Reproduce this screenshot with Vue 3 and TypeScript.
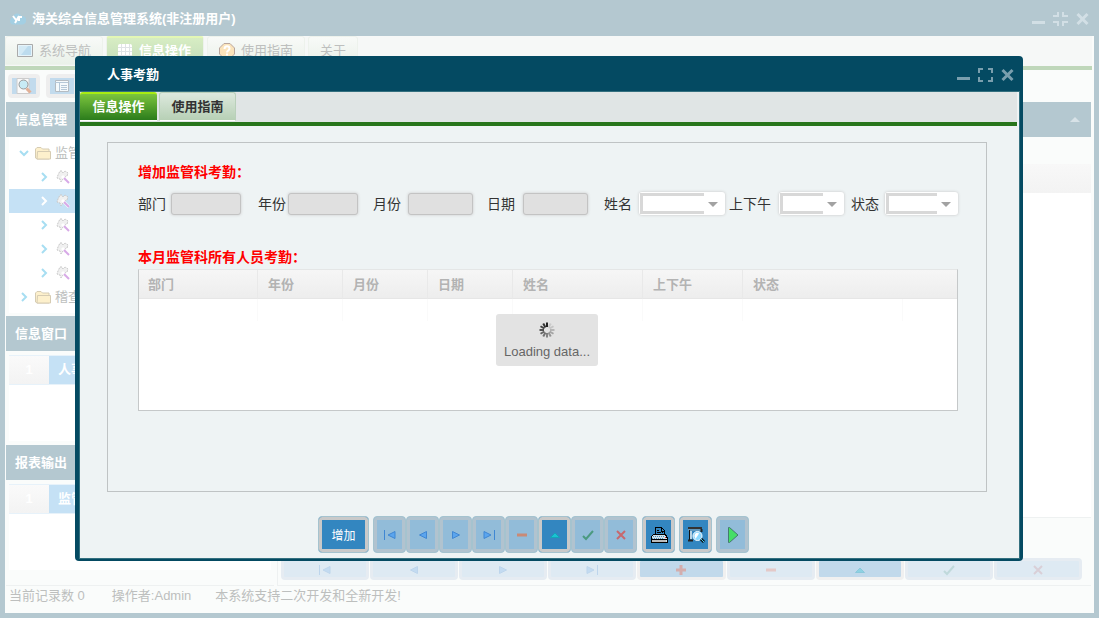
<script setup lang="ts">
import { ref } from 'vue'

interface NavAction {
  name: string
  label: string
  off: boolean
}

interface Field {
  id: string
  label: string
  kind: 'input' | 'select'
  size: string
}

const glyphs: Record<string, string> = {
  first: 'M1.500 1v10M12 2.500v7L5 6z',
  prev: 'M10.500 2.500v7L3.500 6z',
  next: 'M3.500 2.500v7l7-3.500z',
  last: 'M12.500 1v10M2 2.500v7L9 6z',
  plus: 'M2 6h10M7 1v10',
  minus: 'M2 6h10',
  edit: 'M2.500 8.500L7 4l4.500 4.500z',
  check: 'M2 7l3 3 7-8',
  cross: 'M3 2l8 8m0-8l-8 8',
}

const dialogActions: NavAction[] = [
  { name: 'first', label: '首条', off: true },
  { name: 'prev', label: '上一条', off: true },
  { name: 'next', label: '下一条', off: true },
  { name: 'last', label: '末条', off: true },
  { name: 'minus', label: '删除', off: true },
  { name: 'edit', label: '编辑', off: false },
  { name: 'check', label: '保存', off: true },
  { name: 'cross', label: '取消', off: true },
]

const mainActions: NavAction[] = [
  ...dialogActions.slice(0, 4),
  { name: 'plus', label: '增加', off: false },
  ...dialogActions.slice(4),
]

const fields: Field[] = [
  { id: 'dept', label: '部门', kind: 'input', size: 'wide' },
  { id: 'year', label: '年份', kind: 'input', size: 'wide' },
  { id: 'month', label: '月份', kind: 'input', size: 'short' },
  { id: 'day', label: '日期', kind: 'input', size: 'short' },
  { id: 'person', label: '姓名', kind: 'select', size: 'full' },
  { id: 'half', label: '上下午', kind: 'select', size: 'short' },
  { id: 'state', label: '状态', kind: 'select', size: 'mid' },
]

const columns = ['部门', '年份', '月份', '日期', '姓名', '上下午', '状态', '']
const treeItems = [0, 1, 2, 3, 4]
const selectedItem = ref(1)
const spokes = Array.from({ length: 12 }, (_, i) => ({
  turn: `rotate(${-i * 30} 8 8)`,
  fade: Math.max(0.12, 1 - i * 0.085),
}))
</script>

<template>
  <div class="desktop">
    <header class="titlebar">
      <svg class="logo" width="16" height="14" viewBox="0 0 16 14">
        <path d="M4 12.500a3.500 3.500 0 0 1-1-7A4.500 4.500 0 0 1 11.500 4 4 4 0 0 1 12.500 12.500z" fill="#a3cfe3" />
        <path d="M3 4l3 4M9 4l-4 7M9 9V5h3" fill="none" stroke="#fff" stroke-width="2" />
      </svg>
      <h1>海关综合信息管理系统(非注册用户)</h1>
      <div class="controls">
        <button type="button" aria-label="最小化"><svg width="14" height="14"><path d="M1 9h13v3H1z" /></svg></button>
        <button type="button" aria-label="还原"><svg width="15" height="14"><path d="M4 0h2v5H0V3h4zM9 0h2v3h4v2H9zM0 9h6v5H4v-3H0zM9 9h6v2h-4v3H9z" /></svg></button>
        <button type="button" aria-label="关闭"><svg width="13" height="14"><path d="M1.500 2l10 10m0-10l-10 10" class="x" /></svg></button>
      </div>
    </header>

    <div class="workspace">
      <nav class="tabs">
        <button type="button" class="with-icon">
          <svg width="16" height="14"><path d="M.5.500h15v12H.5z" fill="#e6f4fa" stroke="#aaa" /><path d="M2 2h12v9H2z" fill="#bddcee" /><path d="M2 2h9L4 11H2z" fill="#d4eaf5" /></svg>
          系统导航
        </button>
        <button type="button" class="with-icon current">
          <svg width="14" height="14"><rect width="14" height="14" rx="2" fill="#fff" /><path d="M0 3.500h14M0 7.500h14M0 11.500h14M3.500 0v14M7.500 0v14M11.500 0v14" stroke="#dfe3e6" /></svg>
          信息操作
        </button>
        <button type="button" class="with-icon">
          <svg width="16" height="16"><path d="M5 .5h6l4.500 4.500v6L11 15.500H5L.5 11V5z" fill="#fbe4bb" stroke="#b9a69d" /><path d="M5.500 6c0-4 5-3.500 5-.5 0 2-2.500 2-2.500 4m0 1v2" fill="none" stroke="#fff" stroke-width="2" /></svg>
          使用指南
        </button>
        <button type="button">关于</button>
      </nav>
      <div class="tools">
        <button type="button" aria-label="查询">
          <svg width="16" height="16"><path d="M1 .5h12v15H1z" fill="#fafafa" stroke="#ccc" /><circle cx="7.500" cy="6.500" r="4.500" fill="#c8ebf5" stroke="#999" /><path d="M10.500 10.500l4 4" stroke="#e2b097" stroke-width="3" /></svg>
        </button>
        <button type="button" aria-label="列表">
          <svg width="16" height="16"><path d="M1.500 2.500h13v11h-13z" fill="#f5fafc" stroke="#b5bcc2" /><path d="M1 4.500h13M5.500 4v9M7 7.500h6M7 9.500h6M7 11.500h6" stroke="#b5c8d8" /></svg>
        </button>
      </div>

      <div class="columns">
        <aside class="side">
          <section class="tree-panel">
            <h2>信息管理</h2>
            <ul class="tree">
              <li class="branch">
                <svg width="10" height="10" class="caret"><path d="M1 3l4 4 4-4" /></svg>
                <svg width="16" height="13" class="folder"><path d="M.5 11V2l1.500-1.500h4L7.500 2H14v10H2z" /><path d="M2.500 4.500h13V12H2z" /></svg>
                监管
              </li>
              <li v-for="item in treeItems" :key="item" class="leaf" :class="{ selected: item === selectedItem }" @click="selectedItem = item">
                <svg width="10" height="10" class="caret"><path d="M3 1l4 4-4 4" /></svg>
                <svg width="14" height="14" class="tool"><path d="M4 1h2l1 2 2-2 3 2-1 3-2 1 0 3-2-1-2 3-1-3-3-1 1-3z" fill="#f0f0f0" stroke="#c8c8c8" stroke-dasharray="2 1" /><path d="M6 6l7 7" stroke="#fff" stroke-width="3" /><path d="M8 8l5 5" stroke="#d7a9e7" stroke-width="2" /></svg>
              </li>
              <li class="branch">
                <svg width="10" height="10" class="caret"><path d="M3 1l4 4-4 4" /></svg>
                <svg width="16" height="13" class="folder"><path d="M.5 11V2l1.500-1.500h4L7.500 2H14v10H2z" /><path d="M2.500 4.500h13V12H2z" /></svg>
                稽查
              </li>
            </ul>
          </section>
          <section class="window-panel">
            <h2>信息窗口</h2>
            <div class="list"><div class="entry"><b>1</b><span>人事考勤</span></div></div>
          </section>
          <section class="report-panel">
            <h2>报表输出</h2>
            <div class="list"><div class="entry"><b>1</b><span>监管</span></div></div>
          </section>
        </aside>
        <main class="content">
          <div class="content-head"><svg width="10" height="6"><path d="M0 5l5-5 5 5z" /></svg></div>
          <div class="content-sub"></div>
          <div class="content-cols"></div>
          <div class="content-body"></div>
          <div class="main-actions">
            <button v-for="a in mainActions" :key="a.name" type="button" class="nav" :class="{ off: a.off }" :aria-label="a.label">
              <svg width="14" height="12" viewBox="0 0 14 12" :class="a.name"><path :d="glyphs[a.name]" /></svg>
            </button>
          </div>
        </main>
      </div>
      <footer class="status">
        <span>当前记录数 0</span>
        <span>操作者:Admin</span>
        <span>本系统支持二次开发和全新开发!</span>
      </footer>
    </div>

    <div class="dialog" role="dialog" aria-labelledby="dialog-title">
      <header class="dialog-title">
        <h2 id="dialog-title">人事考勤</h2>
        <div class="controls">
          <button type="button" aria-label="最小化"><svg width="14" height="14"><path d="M1 9h13v3H1z" /></svg></button>
          <button type="button" aria-label="最大化"><svg width="15" height="14"><path d="M0 0h5v2H2v3H0zM10 0h5v5h-2V2h-3zM0 9h2v3h3v2H0zM13 9h2v5h-5v-2h3z" /></svg></button>
          <button type="button" aria-label="关闭"><svg width="13" height="14"><path d="M1.500 2l10 10m0-10l-10 10" class="x" /></svg></button>
        </div>
      </header>
      <div class="dialog-body">
        <nav class="dialog-tabs">
          <button type="button" class="current">信息操作</button>
          <button type="button">使用指南</button>
        </nav>
        <div class="frame">
          <h3>增加监管科考勤：</h3>
          <form class="fields" @submit.prevent>
            <template v-for="f in fields" :key="f.id">
              <label :for="f.id">{{ f.label }}</label>
              <input v-if="f.kind === 'input'" :id="f.id" type="text" readonly :class="f.size" />
              <div v-else class="picker" :class="f.size">
                <select :id="f.id"><option></option></select>
                <svg width="10" height="5"><path d="M0 0h10L5 5z" /></svg>
              </div>
            </template>
          </form>
          <h3>本月监管科所有人员考勤：</h3>
          <div class="grid">
            <table>
              <colgroup>
                <col class="c119" /><col class="c85" /><col class="c85" /><col class="c85" />
                <col class="c130" /><col class="c100" /><col class="c160" /><col />
              </colgroup>
              <thead>
                <tr><th v-for="(c, i) in columns" :key="i">{{ c }}</th></tr>
              </thead>
              <tbody>
                <tr><td v-for="(c, i) in columns" :key="i"></td></tr>
              </tbody>
            </table>
            <div class="loading">
              <svg width="16" height="16">
                <path v-for="(s, i) in spokes" :key="i" d="M8 .5V5" :transform="s.turn" :opacity="s.fade" stroke="#222" stroke-width="2" />
              </svg>
              <span>Loading data...</span>
            </div>
          </div>
        </div>
        <div class="dialog-actions">
          <button type="button" class="nav add">增加</button>
          <div class="nav-group">
            <button v-for="a in dialogActions" :key="a.name" type="button" class="nav" :class="{ off: a.off }" :aria-label="a.label">
              <svg width="14" height="12" viewBox="0 0 14 12" :class="a.name"><path :d="glyphs[a.name]" /></svg>
            </button>
          </div>
          <button type="button" class="nav" aria-label="打印">
            <svg width="18" height="18" viewBox="0 0 18 18" shape-rendering="crispEdges">
              <path d="M5.500 8V1.500h6l3 3V8" fill="#3386c0" stroke="#000" />
              <path d="M11.500 1v4H15M7 4.500h2M7 6.500h4M12 6.500h1" fill="none" stroke="#000" />
              <path d="M3.500 8.500h12l1.500 3v5H1v-5z" fill="#cfe0e8" stroke="#000" />
              <path d="M3 10h12M2 12h12" stroke="#4b8fba" stroke-dasharray="1 1" />
              <path d="M1 13.500h16" stroke="#000" />
              <path d="M2 15h14" stroke="#bbb" stroke-width="2" />
              <path d="M15 11h1v1h-1z" fill="#e33" />
            </svg>
          </button>
          <button type="button" class="nav" aria-label="预览">
            <svg width="18" height="18" viewBox="0 0 18 18">
              <path d="M1 2h14" stroke="#333" stroke-width="2" />
              <path d="M1 4h13" stroke="#8fa9b8" />
              <path d="M2.500 4v10" stroke="#111" /><path d="M4 5v8" stroke="#b9d4e4" stroke-width="2" />
              <path d="M1 14.500h5M14.500 3v3" stroke="#222" stroke-width="2" />
              <circle cx="10.500" cy="10" r="4.500" fill="#8ad8ff" stroke="#f4fbff" />
              <path d="M7.500 10c0-3.500 3.500-4 4.500-2.500L8.500 13z" fill="#fff" />
              <path d="M14 13l3 3" stroke="#111" stroke-width="3" /><path d="M14 13l3 3" stroke="#4ce" />
            </svg>
          </button>
          <button type="button" class="nav off" aria-label="执行">
            <svg width="12" height="18"><path d="M1.500 1.500v15h1l8.500-7.500-8.500-7.500z" fill="#45de67" stroke="#447b70" /></svg>
          </button>
        </div>
      </div>
    </div>
  </div>
</template>

<style>
body {
  margin: 0;
  overflow: hidden;
}
</style>

<style scoped>
.desktop {
  display: flex;
  flex-direction: column;
  box-sizing: border-box;
  height: 100vh;
  padding: 0 5px 5px;
  background: #b4c8d0;
  color: #bdbfbe;
  font: 13px/20px "Liberation Sans", "Noto Sans CJK SC", sans-serif;
}
h1, h2, h3 {
  margin: 0;
  font-size: 13px;
}
button {
  padding: 0;
  border: 0;
  background: none;
  color: inherit;
  font: inherit;
  white-space: nowrap;
}
svg {
  flex: none;
  display: block;
}
.titlebar {
  flex: none;
  display: flex;
  align-items: center;
  height: 36px;
  padding: 2px 5px 0;
  box-sizing: border-box;
  color: #fff;
}
.logo {
  margin-right: 6px;
}
.controls {
  display: flex;
  gap: 8px;
  margin-left: auto;
  color: #d2dfe5;
}
.controls path {
  fill: currentColor;
}
.controls .x {
  stroke: currentColor;
  stroke-width: 3;
}
.workspace {
  flex: 1;
  min-height: 0;
  display: flex;
  flex-direction: column;
  background: #fafcfb;
}
.tabs {
  flex: none;
  display: flex;
  gap: 3px;
  height: 30px;
  box-sizing: border-box;
  margin-right: 2px;
  background: #f6f8f7;
}
.tabs button {
  display: flex;
  align-items: center;
  gap: 6px;
  height: 29px;
  padding: 0 11px;
  box-sizing: border-box;
  border: 1px solid #edf2ec;
  border-radius: 3px 3px 0 0;
  background: linear-gradient(#f8faf8, #eaf1e9);
}
.tabs .with-icon {
  width: 98px;
}
.tabs .current {
  gap: 7px;
  border-top: 2px solid #e3f7b5;
  background: linear-gradient(#d7edc3, #c3dcba);
  color: #fff;
  font-weight: bold;
}
.tools {
  flex: none;
  display: flex;
  gap: 6px;
  height: 36px;
  padding: 4px 3px;
  box-sizing: border-box;
  margin-right: 2px;
  border-top: 4px solid #bfd7ba;
}
.tools button {
  display: grid;
  place-items: center;
  width: 32px;
  height: 24px;
  border: 4px solid #eee;
  box-sizing: border-box;
  border-radius: 4px;
  background: #c2dbed;
}
.columns {
  flex: 1;
  min-height: 0;
  display: flex;
  gap: 3px;
  padding: 0 3px 0 1px;
}
.side {
  flex: none;
  display: flex;
  flex-direction: column;
  width: 268px;
}
.side h2 {
  height: 35px;
  padding-left: 9px;
  background: #b4c8d0;
  color: #fff;
  line-height: 35px;
}
.tree-panel {
  height: 214px;
}
.tree {
  margin: 0 3px;
  padding: 4px 0;
  background: #fff;
  list-style: none;
}
.tree li {
  display: flex;
  align-items: center;
  height: 24px;
}
.branch {
  padding-left: 10px;
}
.leaf {
  gap: 6px;
  padding-left: 30px;
}
.selected {
  background: #c5e1f5;
}
.caret {
  fill: none;
  stroke: #a7def2;
  stroke-width: 2;
}
.selected .caret {
  stroke: #fff;
}
.folder {
  margin: 0 4px 0 6px;
  fill: #fdf0cc;
  stroke: #d6ccb3;
}
.leaf .tool {
  margin-left: 1px;
}
.window-panel {
  display: flex;
  flex-direction: column;
  height: 129px;
}
.window-panel h2 {
  flex: none;
}
.report-panel {
  flex: 1;
  border-bottom: 1px solid #eef1f1;
}
.list {
  flex: 1;
  min-height: 86px;
  margin: 4px 3px;
  background: #fff;
}
.entry {
  display: flex;
  border: solid #e7f2fa;
  border-width: 1px 0;
  color: #fff;
  font-weight: bold;
  line-height: 28px;
}
.entry b {
  width: 40px;
  background: linear-gradient(#fafafa, #f3f3f3);
  text-align: center;
}
.entry span {
  flex: 1;
  padding-left: 9px;
  background: #c5e1f5;
}
.content {
  flex: 1;
  display: flex;
  flex-direction: column;
  border: solid #eef1f1;
  border-width: 0 0 1px 1px;
}
.content-head {
  display: flex;
  align-items: center;
  justify-content: flex-end;
  height: 35px;
  padding-right: 11px;
  background: #b4c8d0;
  fill: #d7e2e7;
}
.content-sub {
  height: 27px;
}
.content-cols {
  height: 29px;
  background: linear-gradient(#f8f8f8, #f3f3f3);
}
.content-body {
  flex: 1;
  background: #fff;
  border-bottom: 1px solid #eef1f1;
}
.main-actions {
  display: grid;
  grid-template-columns: repeat(9, 1fr);
  gap: 1px;
  padding: 40px 9px 5px 3px;
}
.main-actions .nav {
  width: auto;
  height: 22px;
  padding-top: 2px;
  border: 3px solid #f0f0f0;
  box-shadow: none;
  background: #c1d9eb;
}
.main-actions .off {
  border-color: #e6ecf2;
  background: #deeaf3;
}
.main-actions svg {
  opacity: 0.3;
}
.main-actions .off svg {
  opacity: 0.2;
}
.status {
  flex: none;
  display: flex;
  gap: 24px;
  height: 27px;
  padding: 0 4px;
}
.status span:nth-child(2) {
  margin-left: 3px;
}

.dialog {
  position: fixed;
  inset: 56px 76px 57px 75px;
  display: flex;
  flex-direction: column;
  box-sizing: border-box;
  padding: 0 4px 3px 5px;
  border-radius: 4px;
  background: #044a62;
  color: #333;
}
.dialog-title {
  flex: none;
  display: flex;
  align-items: center;
  height: 36px;
  padding: 2px 5px 0 27px;
  box-sizing: border-box;
  color: #fff;
}
.dialog-title .controls {
  color: #7a9fae;
}
.dialog-title h2 {
  line-height: 22px;
}
.dialog-body {
  flex: 1;
  display: flex;
  flex-direction: column;
  background: #eef3f4;
  box-shadow: 0 0 0 1px #34707f;
}
.dialog-tabs {
  flex: none;
  display: flex;
  gap: 2px;
  height: 34px;
  box-sizing: border-box;
  margin-right: 2px;
  border-bottom: 4px solid #27751b;
  background: #e0e5e5;
}
.dialog-tabs button {
  width: 77px;
  height: 29px;
  box-sizing: border-box;
  border: 1px solid #b9d0ba;
  border-bottom-color: #fff;
  border-radius: 3px 3px 0 0;
  background: linear-gradient(#dde9de, #b7d0b5);
  font-weight: bold;
}
.dialog-tabs .current {
  border: 0;
  border-top: 2px solid #a8ec12;
  border-bottom: 1px solid #fff;
  background: linear-gradient(#7cc53d, #2b7c1c);
  color: #fff;
}
.frame {
  flex: 1;
  margin: 16px 32px 0 27px;
  padding: 18px 28px 0 30px;
  border: 1px solid #bfc3c4;
}
.frame h3 {
  color: #f00;
  font-size: 14px;
  line-height: 22px;
}
.fields {
  display: grid;
  grid-template-columns: 33px 87px 30px 85px 35px 79px 36px 81px 35px 90px 50px 72px 34px 73px;
  align-items: center;
  height: 23px;
  margin: 9px 0 31px;
  font-size: 14px;
}
.fields label {
  white-space: nowrap;
}
.fields input {
  height: 22px;
  box-sizing: border-box;
  border: 1px solid #c3c3c3;
  border-radius: 3px;
  background: #e0e0e0;
  box-shadow: 0 0 3px #c8c8c8;
}
.fields .wide {
  width: 70px;
}
.fields .short {
  width: 65px;
}
.fields .full {
  width: 86px;
}
.fields .mid {
  width: 73px;
}
.picker {
  position: relative;
  height: 23px;
  border-radius: 3px;
  background: #fff;
  box-shadow: 0 0 3px #c4c4c4;
}
.picker::before {
  content: "";
  position: absolute;
  inset: 1px 21px 1px 1px;
  border: 3px solid #d8d8d8;
  border-right: 0;
}
.picker select {
  position: relative;
  width: 100%;
  height: 100%;
  border: 0;
  background: none;
  appearance: none;
}
.picker svg {
  position: absolute;
  top: 10px;
  right: 7px;
  fill: #a2a2a2;
  pointer-events: none;
}
.grid {
  position: relative;
  height: 140px;
  margin-top: 1px;
  border: 1px solid #c5c8c9;
  border-top-color: #e4e6e6;
  background: #fff;
}
table {
  width: 100%;
  table-layout: fixed;
  border-collapse: separate;
  border-spacing: 0;
}
th {
  height: 29px;
  padding: 1px 0 0 10px;
  box-sizing: border-box;
  border-right: 1px solid #e9e9e9;
  border-bottom: 1px solid #e6e6e6;
  background: linear-gradient(#f6f6f6, #ededed);
  color: #b3b3b3;
  text-align: left;
}
th:first-child {
  padding-left: 9px;
}
th:nth-last-child(-n+2) {
  border-right: 0;
}
td {
  height: 22px;
  padding: 0;
  border-right: 1px solid #fafafa;
}
td:last-child {
  border-right: 0;
}
.c85 {
  width: 85px;
}
.c100 {
  width: 100px;
}
.c119 {
  width: 119px;
}
.c130 {
  width: 130px;
}
.c160 {
  width: 160px;
}
.loading {
  position: absolute;
  top: 44px;
  left: calc(50% - 52px);
  display: flex;
  flex-direction: column;
  align-items: center;
  width: 102px;
  height: 52px;
  padding-top: 8px;
  box-sizing: border-box;
  border-radius: 3px;
  background: #e3e3e3;
  color: #666;
}
.loading span {
  line-height: 27px;
}
.dialog-actions {
  flex: none;
  display: flex;
  gap: 4px;
  padding: 24px 0 5px 238px;
}
.nav-group {
  display: flex;
  margin-right: 1px;
}
.nav {
  display: grid;
  place-items: center;
  width: 33px;
  height: 37px;
  box-sizing: border-box;
  border: 1px solid #a5c3cf;
  border-radius: 4px;
  background: #3386c0;
  box-shadow: inset 0 0 0 3px #c9c9c9;
  color: #fff;
}
.dialog-actions .off {
  background: #92bcd9;
  box-shadow: inset 0 0 0 3px #b1c3cf;
}
.dialog-actions .add {
  width: 51px;
  padding-top: 2px;
  font-size: 12px;
}
.first, .prev, .next, .last {
  fill: #5ba5ee;
  stroke: #3f87d3;
}
.plus, .minus {
  stroke: #c98a76;
  stroke-width: 3;
}
.main-actions .plus, .main-actions .minus {
  stroke: #ff4a20;
}
.edit {
  fill: #19c3d3;
  stroke: #12a5b8;
}
.check {
  fill: none;
  stroke: #4b9a80;
  stroke-width: 2;
}
.cross {
  fill: none;
  stroke: #c7686d;
  stroke-width: 2;
}
</style>
